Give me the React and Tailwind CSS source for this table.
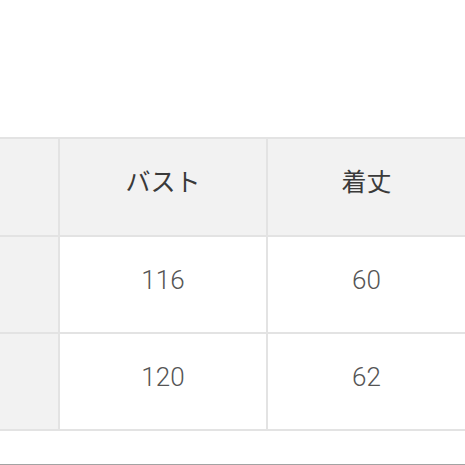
export default function App() {
  const rows = [
    ["116", "60"],
    ["120", "62"],
  ];

  return (
    <div className="w-[465px] h-[465px] bg-white overflow-hidden flex flex-col font-['Roboto','Noto_Sans_CJK_JP',sans-serif] text-[#444]">
      <div className="h-[137px] shrink-0" />

      {/* size table */}
      <div className="grid grid-cols-[60px_208px_1fr] border-t-2 border-[#e3e3e3]">
        <div className="h-[98px] bg-[#f2f2f2] border-r-2 border-b-2 border-[#e3e3e3]" />
        <div className="h-[98px] pb-[8px] bg-[#f2f2f2] border-r-2 border-b-2 border-[#e3e3e3] flex items-center justify-center text-[25px] text-[#3a3a3a]">
          バスト
        </div>
        <div className="h-[98px] pb-[8px] bg-[#f2f2f2] border-b-2 border-[#e3e3e3] flex items-center justify-center text-[25px] text-[#3a3a3a]">
          着丈
        </div>

        {rows.map((r, idx) => (
          <div key={idx} className="contents">
            <div className="h-[97px] bg-[#f2f2f2] border-r-2 border-b-2 border-[#e3e3e3]" />
            <div className="h-[97px] pb-[9px] bg-white border-r-2 border-b-2 border-[#e3e3e3] flex items-center justify-center text-[26px] font-light text-[#555]">
              {r[0]}
            </div>
            <div className="h-[97px] pb-[9px] bg-white border-b-2 border-[#e3e3e3] flex items-center justify-center text-[26px] font-light text-[#555]">
              {r[1]}
            </div>
          </div>
        ))}
      </div>

      <div className="flex-1" />
      <div className="h-px bg-[#a3a3a3]" />
    </div>
  );
}
